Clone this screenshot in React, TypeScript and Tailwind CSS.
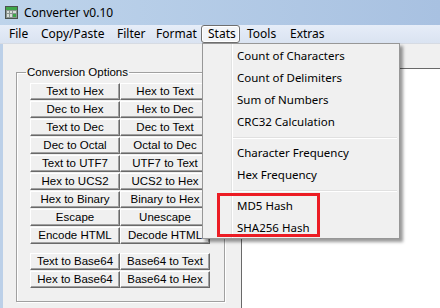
import React from 'react'

const leftButtons: [string, string][] = [
  ['Text to Hex', 'Hex to Text'],
  ['Dec to Hex', 'Hex to Dec'],
  ['Text to Dec', 'Dec to Text'],
  ['Dec to Octal', 'Octal to Dec'],
  ['Text to UTF7', 'UTF7 to Text'],
  ['Hex to UCS2', 'UCS2 to Hex'],
  ['Hex to Binary', 'Binary to Hex'],
  ['Escape', 'Unescape'],
  ['Encode HTML', 'Decode HTML'],
]

const base64Buttons: [string, string][] = [
  ['Text to Base64', 'Base64 to Text'],
  ['Hex to Base64', 'Base64 to Hex'],
]

const menus = [
  { label: 'File', w: 'w-[32px]' },
  { label: 'Copy/Paste', w: 'w-[76px]' },
  { label: 'Filter', w: 'w-[39px]' },
  { label: 'Format', w: 'w-[52px]' },
  { label: 'Stats', w: 'w-[39px]', open: true },
  { label: 'Tools', w: 'w-[43px]' },
  { label: 'Extras', w: 'w-[50px]' },
]

function AppIcon() {
  return (
    <svg width="13" height="13" viewBox="0 0 13 13">
      <rect x="0.5" y="0.5" width="12" height="12" fill="#8a9590" stroke="#4b524e" />
      <rect x="1" y="1" width="11" height="3" fill="#3fa64a" />
      <g fill="#d9ddd9">
        <rect x="2" y="5" width="2" height="2" />
        <rect x="5" y="5" width="2" height="2" />
        <rect x="8" y="5" width="3" height="2" />
        <rect x="2" y="8" width="2" height="3" />
        <rect x="5" y="8" width="2" height="3" />
      </g>
      <rect x="8" y="8" width="3" height="3" fill="#3fa64a" />
    </svg>
  )
}

function Btn({ label }: { label: string }) {
  return (
    <button className="h-[17px] w-[90px] bg-[#f0f0f0] border border-t-white border-l-white border-b-[#696969] border-r-[#696969] shadow-[inset_-1px_-1px_0_#a0a0a0] text-[11.5px] leading-none text-black font-['Liberation_Sans',sans-serif]">
      {label}
    </button>
  )
}

function Item({ label }: { label: string }) {
  return <div className="h-[22px] flex items-center pl-[4px] text-[11.5px] text-black">{label}</div>
}

function Sep() {
  return (
    <div className="h-[9px] flex items-center mr-[2px]">
      <div className="w-full border-t border-[#e0e0e0] border-b border-b-white" />
    </div>
  )
}

export default function App() {
  return (
    <div className="relative w-[440px] h-[308px] overflow-hidden bg-[#f0f0f0] font-['Noto_Sans',sans-serif]">
      {/* title bar */}
      <div className="h-[25px] flex items-center gap-[6px] pl-[5px] bg-gradient-to-r from-[#bed4eb] to-[#a8c1e1]">
        <AppIcon />
        <span className="text-[12px] text-black">Converter v0.10</span>
      </div>

      {/* menu bar */}
      <div className="h-[19px] flex pl-[2px] bg-gradient-to-b from-[#e6edf8] to-[#dae3f1] border-b border-[#d6dbe3]">
        {menus.map((m) => (
          <div
            key={m.label}
            className={
              m.open
                ? `${m.w} h-[18px] flex items-center pl-[6px] rounded-[3px] border border-[#6f6f6f] bg-[#f3f5f8] shadow-[inset_0_0_0_1px_#fff] text-[12px] text-black`
                : `${m.w} h-[18px] flex items-center pl-[7px] text-[12px] text-black`
            }
          >
            {m.label}
          </div>
        ))}
      </div>

      {/* body */}
      <div className="flex h-[264px]">
        <div className="w-[3px] bg-[#bcd0e8]" />
        <div className="w-[238px] pl-[13px] pt-[22px]">
          <fieldset className="w-[209px] border border-[#a0a0a0] shadow-[1px_1px_0_#fff,inset_1px_1px_0_#fff]">
            <legend className="ml-[9px] px-[1px] text-[11.5px] leading-[13px] text-black font-['Liberation_Sans',sans-serif]">
              Conversion Options
            </legend>
            <div className="pl-[13px] pt-[4px] pb-[13px]">
              <div className="grid grid-cols-[90px_90px] gap-y-[1px]">
                {leftButtons.map(([a, b]) => (
                  <React.Fragment key={a}>
                    <Btn label={a} />
                    <Btn label={b} />
                  </React.Fragment>
                ))}
              </div>
              <div className="grid grid-cols-[90px_90px] gap-y-[1px] mt-[9px]">
                {base64Buttons.map(([a, b]) => (
                  <React.Fragment key={a}>
                    <Btn label={a} />
                    <Btn label={b} />
                  </React.Fragment>
                ))}
              </div>
            </div>
          </fieldset>
        </div>
        <div className="flex-1 flex flex-col">
          <div className="h-[24px]" />
          <div className="flex-1 bg-white border-t border-l border-[#696969]" />
        </div>
      </div>

      {/* Stats dropdown */}
      <div className="absolute left-[202px] top-[43px] w-[198px] h-[196px] overflow-hidden flex bg-[#f0f0f0] border border-[#979797] shadow-[3px_3px_3px_rgba(0,0,0,0.4)]">
        <div className="w-[29px] border-r border-[#e2e3e3]" />
        <div className="flex-1 border-l border-white py-[1px]">
          <Item label="Count of Characters" />
          <Item label="Count of Delimiters" />
          <Item label="Sum of Numbers" />
          <Item label="CRC32 Calculation" />
          <Sep />
          <Item label="Character Frequency" />
          <Item label="Hex Frequency" />
          <Sep />
          <Item label="MD5 Hash" />
          <Item label="SHA256 Hash" />
        </div>
      </div>

      {/* highlight annotation */}
      <div className="absolute left-[217px] top-[193px] w-[103px] h-[44px] border-[3px] border-[#ec1c24]" />
    </div>
  )
}
